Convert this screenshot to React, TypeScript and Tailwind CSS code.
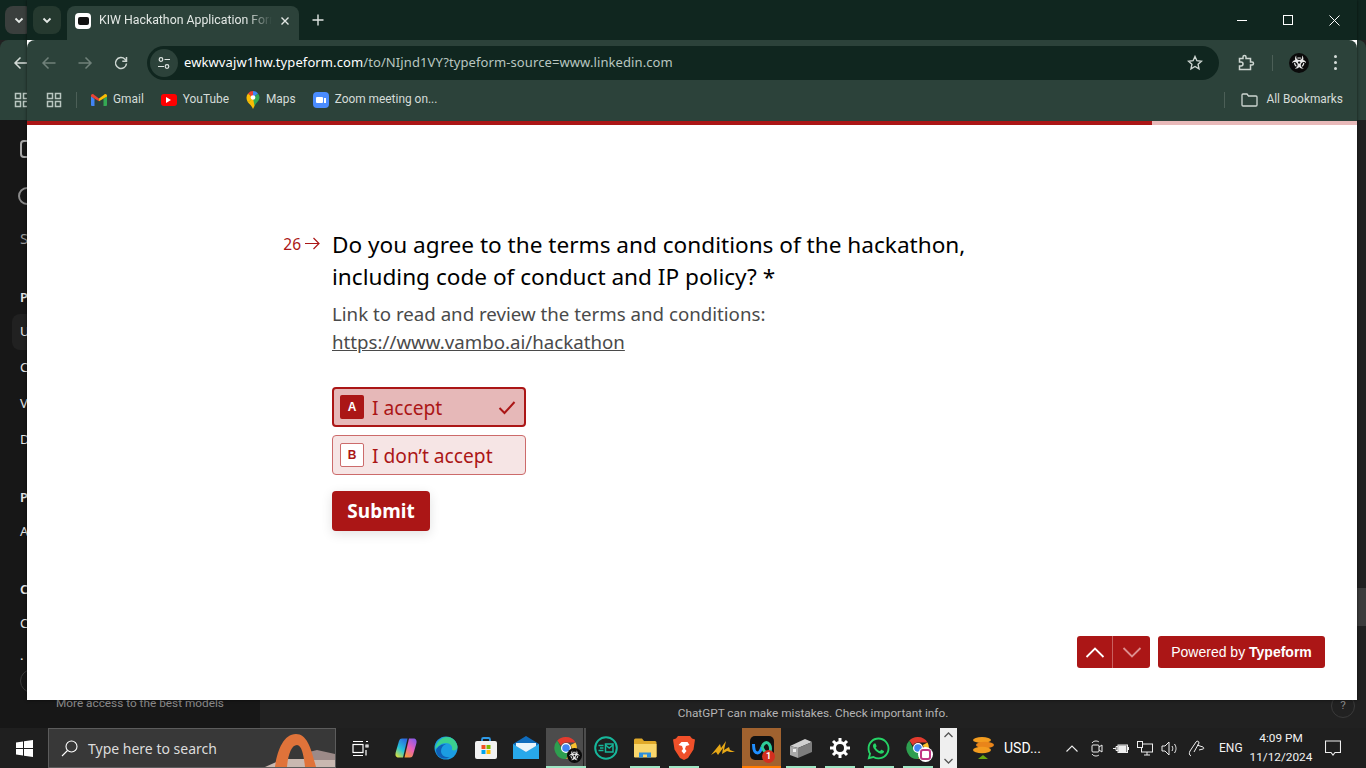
import React from "react";
import { FaBiohazard, FaWhatsapp } from "react-icons/fa";

const ui = "font-['Noto_Sans',sans-serif]";
const chromeFont = "font-['Roboto',sans-serif]";

function ChromeLogo({ size = 24 }: { size?: number }) {
  return (
    <svg width={size} height={size} viewBox="0 0 24 24">
      <path d="M12 1a11 11 0 0 1 9.5 5.5H12a5.5 5.5 0 0 0-5 3.2L3.3 4.6A11 11 0 0 1 12 1z" fill="#e33b2e" />
      <path d="M21.5 6.5A11 11 0 0 1 12 23l4.7-8.2A5.5 5.5 0 0 0 16.8 9z" fill="#fbc02d" />
      <path d="M12 23A11 11 0 0 1 3.3 4.6l4.500 8.600a5.5 5.5 0 0 0 7 2.500z" fill="#2e9e4f" />
      <circle cx="12" cy="12" r="4.4" fill="#4285f4" stroke="#fff" strokeWidth="1.2" />
    </svg>
  );
}

function Biohazard({ size = 20 }: { size?: number }) {
  return (
    <div className="rounded-full bg-[#0b0b0b] flex items-center justify-center" style={{ width: size, height: size }}>
      <FaBiohazard color="#e8e8e8" size={size * 0.72} />
    </div>
  );
}

function AppsGrid({ color = "#b9c6c0" }: { color?: string }) {
  return (
    <svg width="16" height="16" viewBox="0 0 16 16" fill="none" stroke={color} strokeWidth="1.5">
      <rect x="1.500" y="1.500" width="5" height="5" />
      <rect x="9.500" y="1.500" width="5" height="5" />
      <rect x="1.500" y="9.500" width="5" height="5" />
      <rect x="9.500" y="9.500" width="5" height="5" />
    </svg>
  );
}

function Chevron() {
  return (
    <svg width="12" height="12" viewBox="0 0 12 12" fill="none" stroke="#e4e9e6" strokeWidth="1.8">
      <path d="M2.500 4.500 6 8l3.500-3.500" />
    </svg>
  );
}

function NavArrow({ flip = false, color }: { flip?: boolean; color: string }) {
  return (
    <svg width="16" height="16" viewBox="0 0 16 16" fill="none" stroke={color} strokeWidth="1.5" className={flip ? "rotate-180" : ""}>
      <path d="M14.500 8H2M7.500 2.500 2 8l5.500 5.500" />
    </svg>
  );
}

function Bookmark({ icon, label }: { icon: React.ReactNode; label: string }) {
  return (
    <div className="flex items-center gap-[6px] h-7 text-[11.9px] text-[#d5dcd8]">
      {icon}
      <span>{label}</span>
    </div>
  );
}

function BackWindow() {
  return (
    <div className="flex flex-col h-[120px] shrink-0">
      <div className="h-[40px] bg-[#10261f] pl-[5px] pt-[6px]">
        <div className="w-[28px] h-[28px] rounded-lg bg-[#3a3f3d] flex items-center justify-center">
          <Chevron />
        </div>
      </div>
      <div className="flex-1 bg-[#2c423a] rounded-t-lg pl-[13px]">
        <div className="h-[45px] flex items-center">
          <NavArrow color="#d5dcd8" />
        </div>
        <div className="h-[30px] flex items-center pl-[1px]">
          <AppsGrid />
        </div>
      </div>
    </div>
  );
}

function Sidebar() {
  const rows = [
    { t: "P", h: "h-[34px]", bold: true },
    { t: "U", h: "h-[36px]", active: true },
    { t: "C", h: "h-[36px]" },
    { t: "V", h: "h-[36px]" },
    { t: "D", h: "h-[58px]" },
    { t: "P", h: "h-[34px]", bold: true },
    { t: "A", h: "h-[58px]" },
    { t: "C", h: "h-[34px]", bold: true },
    { t: "C", h: "h-[32px]" },
    { t: ".", h: "h-[20px]" },
  ];
  return (
    <div className={`${ui} w-[260px] shrink-0 bg-[#171717] flex flex-col text-[13px] text-[#e6e6e6] pl-[20px]`}>
      <div className="h-[54px] flex items-center pt-[4px]">
        <div className="w-[16px] h-[18px] rounded-[4px] border-2 border-[#a8a8a8]" />
      </div>
      <div className="h-[44px] flex items-center -ml-[2px]">
        <div className="w-[18px] h-[18px] rounded-full border-2 border-[#8a8a8a]" />
      </div>
      <div className="h-[38px] flex items-center text-[15px] pt-[2px] text-[#9a9a9a]">S</div>
      <div className="h-[24px]" />
      {rows.map((r, i) => (
        <div key={i} className={`${r.h} flex items-start ${r.bold ? "font-semibold" : ""}`}>
          <div className={`-ml-[8px] pl-[8px] pr-[20px] h-[36px] flex items-center rounded-lg ${r.active ? "bg-[#212121]" : ""}`}>
            {r.t}
          </div>
        </div>
      ))}
      <div className="flex-1" />
      <div className={`${chromeFont} text-[11.8px] text-[#8a8a8a] pl-[36px] pb-[18px] leading-[14px] relative`}>
        <div className="absolute left-0 -top-[27px] w-[24px] h-[24px] rounded-full border border-[#3a3a3a]" />
        More access to the best models
      </div>
    </div>
  );
}

function ChromeWindow() {
  return (
    <div className={`${ui} absolute left-[27px] top-0 w-[1330px] h-[700px] flex flex-col bg-white overflow-hidden shadow-[0_0_3px_rgba(0,0,0,0.6)]`}>
      {/* barra de pestañas */}
      <div className="h-[40px] shrink-0 bg-[#10261f] flex items-end pl-[6px]">
        <div className="w-[28px] h-[28px] mb-[6px] rounded-lg bg-[#25392f] flex items-center justify-center">
          <Chevron />
        </div>
        <div className="ml-[6px] w-[232px] h-[34px] bg-[#2c423a] rounded-t-lg flex items-center pl-[8px] pr-[9px] pb-[5px]">
          <div className="w-[16px] h-[16px] rounded-[4px] bg-white flex items-center justify-center">
            <div className="w-[11px] h-[8px] rounded-[2px] bg-[#111]" />
          </div>
          <div className={`${chromeFont} ml-[8px] flex-1 overflow-hidden whitespace-nowrap text-[12.3px] text-[#e3e8e5] [mask-image:linear-gradient(to_right,black_85%,transparent)]`}>
            KIW Hackathon Application Form
          </div>
          <svg className="ml-[8px]" width="10" height="10" viewBox="0 0 10 10" stroke="#e3e8e5" strokeWidth="1.4">
            <path d="M1.500 1.500l7 7M8.500 1.500l-7 7" />
          </svg>
        </div>
        <div className="ml-[13px] mb-[14px]">
          <svg width="12" height="12" viewBox="0 0 12 12" stroke="#dfe5e2" strokeWidth="1.4">
            <path d="M6 .5v11M.5 6h11" />
          </svg>
        </div>
        <div className="ml-auto flex h-[40px] items-center">
          <div className="w-[46px] flex justify-center">
            <div className="w-[10px] h-[1px] bg-white" />
          </div>
          <div className="w-[46px] flex justify-center">
            <div className="w-[10px] h-[10px] border border-white" />
          </div>
          <div className="w-[46px] flex justify-center">
            <svg width="11" height="11" viewBox="0 0 11 11" stroke="#fff" strokeWidth="1">
              <path d="M.5.5l10 10M10.500.5l-10 10" />
            </svg>
          </div>
        </div>
      </div>

      {/* barra de direcciones */}
      <div className="h-[45px] shrink-0 bg-[#2c423a] rounded-t-lg flex items-center pl-[14px] pr-[14px]">
        <NavArrow color="#70817a" />
        <div className="ml-[20px]">
          <NavArrow flip color="#70817a" />
        </div>
        <svg className="ml-[20px]" width="16" height="16" viewBox="0 0 16 16" fill="none" stroke="#cdd6d1" strokeWidth="1.5">
          <path d="M13.500 8.500A5.500 5.500 0 1 1 12 4.200L13.500 6" />
          <path d="M13.500 2v4.200H9.300" />
        </svg>
        <div className="ml-[18px] w-[1072px] h-[34px] rounded-full bg-[#10261f] flex items-center pl-[3px] pr-[16px]">
          <div className="w-[28px] h-[28px] rounded-full bg-[#2c423a] flex items-center justify-center">
            <svg width="14" height="14" viewBox="0 0 14 14" fill="none" stroke="#dfe5e2" strokeWidth="1.2">
              <circle cx="4" cy="3.500" r="1.800" />
              <path d="M7.500 3.500H13M1 10.500h6" />
              <circle cx="10" cy="10.500" r="1.800" />
            </svg>
          </div>
          <div className="ml-[6px] pt-[1px] text-[13px] tracking-[0.1px] text-[#b9c6c0]">
            <span className="text-white">ewkwvajw1hw.typeform.com</span>/to/NIjnd1VY?typeform-source=www.linkedin.com
          </div>
          <svg className="ml-auto" width="16" height="16" viewBox="0 0 16 16" fill="none" stroke="#cdd6d1" strokeWidth="1.4">
            <path d="M8 1.500l1.900 4.200 4.600.5-3.400 3.100.9 4.500L8 11.500l-4 2.300.9-4.500L1.500 6.200l4.600-.5z" />
          </svg>
        </div>
        <svg className="ml-[18px]" width="18" height="18" viewBox="0 0 18 18" fill="none" stroke="#cdd6d1" strokeWidth="1.5">
          <path d="M2.500 4.500H6V3a1.500 1.500 0 0 1 3 0v1.500h4.500V8H15a1.500 1.500 0 0 1 0 3h-1.500v4.500h-11V12H4a2 2 0 0 0 0-4H2.500z" />
        </svg>
        <div className="ml-[17px] w-[1px] h-[16px] bg-[#4c5f57]" />
        <div className="ml-[16px]">
          <Biohazard />
        </div>
        <div className="ml-[25px] flex flex-col gap-[3px]">
          <div className="w-[3px] h-[3px] rounded-full bg-[#d5dcd8]" />
          <div className="w-[3px] h-[3px] rounded-full bg-[#d5dcd8]" />
          <div className="w-[3px] h-[3px] rounded-full bg-[#d5dcd8]" />
        </div>
      </div>

      {/* marcadores */}
      <div className={`${chromeFont} h-[36px] shrink-0 bg-[#2c423a] flex items-center pl-[19px] pr-[14px] pb-[6px]`}>
        <AppsGrid />
        <div className="ml-[14px] mr-[14px] w-[1px] h-[16px] bg-[#4c5f57]" />
        <div className="flex items-center gap-[17px]">
          <Bookmark
            label="Gmail"
            icon={
              <svg width="16" height="12" viewBox="0 0 16 12">
                <path d="M0 2v9a1 1 0 0 0 1 1h2.500V5z" fill="#4285f4" />
                <path d="M16 2v9a1 1 0 0 1-1 1h-2.500V5z" fill="#34a853" />
                <path d="M0 2.500V1.800C0 .4 1.500-.4 2.600.4L8 4.500v2.800L0 2.500z" fill="#ea4335" />
                <path d="M16 2.500V1.800C16 .4 14.500-.4 13.400.4L8 4.500v2.800l8-4.800z" fill="#fbbc04" />
              </svg>
            }
          />
          <Bookmark
            label="YouTube"
            icon={
              <div className="w-[16px] h-[12px] rounded-[3px] bg-[#f00] flex items-center justify-center">
                <div className="w-0 h-0 border-y-[3px] border-y-transparent border-l-[5px] border-l-white" />
              </div>
            }
          />
          <Bookmark
            label="Maps"
            icon={
              <svg width="14" height="18" viewBox="0 0 14 18">
                <path d="M7 0a6.500 6.500 0 0 1 5 2.400L7 7z" fill="#4285f4" />
                <path d="M2 2.400A6.500 6.500 0 0 1 7 0v7z" fill="#ea4335" />
                <path d="M12 2.400A6.500 6.500 0 0 1 13.500 6.500c0 3-3.500 5.500-5 8.500L2 11.500z" fill="#34a853" />
                <path d="M.5 6.500A6.500 6.500 0 0 1 2 2.400L7 7l-5 4.500C1 10 .5 8 .5 6.500z" fill="#fbbc04" />
                <path d="M2 11.500 7 7l1.500 8c-.5 1-1 2-1.500 3-.8-2.500-3-4.500-5-6.500z" fill="#fbbc04" />
                <circle cx="7" cy="6.500" r="2.300" fill="#fff" />
              </svg>
            }
          />
          <Bookmark
            label="Zoom meeting on..."
            icon={
              <div className="w-[16px] h-[16px] rounded-[4px] bg-[#4a8cff] flex items-center justify-center gap-[1px]">
                <div className="w-[7px] h-[6px] rounded-[1px] bg-white" />
                <div className="w-[2px] h-[5px] bg-white" />
              </div>
            }
          />
        </div>
        <div className="ml-auto w-[1px] h-[16px] bg-[#4c5f57]" />
        <svg className="ml-[16px]" width="17" height="14" viewBox="0 0 17 14" fill="none" stroke="#cdd6d1" strokeWidth="1.3">
          <path d="M1 2a1 1 0 0 1 1-1h4l1.500 2H15a1 1 0 0 1 1 1v8a1 1 0 0 1-1 1H2a1 1 0 0 1-1-1z" />
        </svg>
        <span className="ml-[8px] text-[11.9px] text-[#d5dcd8]">All Bookmarks</span>
      </div>

      {/* barra de progreso */}
      <div className="h-[4px] shrink-0 bg-[#e8b9b9]">
        <div className="h-full w-[1125px] bg-[#ab1616]" />
      </div>

      <TypeformBody />
    </div>
  );
}

function TypeformBody() {
  return (
    <div className="relative flex-1 bg-white pt-[104px] pl-[255px]">
      <div className="flex">
        <div className="w-[50px] pt-[5px] flex items-start gap-[3px] text-[#ab1616] text-[15.5px] leading-[20px] justify-end pr-[12px] shrink-0">
          <span>26</span>
          <svg className="mt-[3px] shrink-0" width="16" height="13" viewBox="0 0 16 13" fill="none" stroke="#ab1616" strokeWidth="1.2">
            <path d="M1 6.500h14M9.500 1 15 6.500 9.500 12" />
          </svg>
        </div>
        <div className="w-[660px]">
          <h1 className="text-[22.6px] leading-[32px] text-black">
            Do you agree to the terms and conditions of the hackathon,
            <br />
            including code of conduct and IP policy? *
          </h1>
          <p className="mt-[7px] text-[18.7px] leading-[28px] text-[#4a4a4a]">
            Link to read and review the terms and conditions:
            <br />
            <span className="underline">https://www.vambo.ai/hackathon</span>
          </p>
          <div className="mt-[31px] flex flex-col gap-[8px] w-[194px]">
            <div className="h-[40px] rounded-[4px] border-2 border-[#ab1616] bg-[#e6b8b8] flex items-center pl-[6px] pr-[8px]">
              <div className="w-[24px] h-[24px] rounded-[2px] bg-[#ab1616] flex items-center justify-center text-white text-[12px] font-bold font-['Liberation_Sans',sans-serif]">
                A
              </div>
              <span className="ml-[8px] pt-[2px] text-[19.2px] text-[#ab1616]">I accept</span>
              <svg className="ml-auto" width="18" height="15" viewBox="0 0 18 15" fill="none" stroke="#ab1616" strokeWidth="2">
                <path d="M1.500 8 6.500 13 16.500 2" />
              </svg>
            </div>
            <div className="h-[40px] rounded-[4px] border border-[#cc6b6b] bg-[#f6e5e5] flex items-center pl-[7px]">
              <div className="w-[24px] h-[24px] rounded-[2px] bg-white border border-[#cc6b6b] flex items-center justify-center text-[#ab1616] text-[12px] font-bold font-['Liberation_Sans',sans-serif]">
                B
              </div>
              <span className="ml-[8px] pt-[2px] text-[19.2px] text-[#ab1616]">I don’t accept</span>
            </div>
          </div>
          <button className="mt-[16px] w-[98px] h-[40px] rounded-[4px] bg-[#ab1616] text-white text-[19px] font-bold shadow-[0_3px_12px_rgba(0,0,0,0.12)]">
            Submit
          </button>
        </div>
      </div>

      {/* controles flotantes */}
      <div className="absolute right-[32px] bottom-[32px] flex gap-[8px] font-['Liberation_Sans',sans-serif]">
        <div className="h-[32px] w-[73px] rounded-[3px] bg-[#ab1616] flex">
          <div className="w-[36px] flex items-center justify-center border-r border-[#c9605f]">
            <svg width="20" height="11" viewBox="0 0 20 11" fill="none" stroke="#fff" strokeWidth="1.8">
              <path d="M1.500 10 10 1.500 18.500 10" />
            </svg>
          </div>
          <div className="flex-1 flex items-center justify-center">
            <svg width="20" height="11" viewBox="0 0 20 11" fill="none" stroke="#dd8f8f" strokeWidth="1.8">
              <path d="M1.500 1 10 9.500 18.500 1" />
            </svg>
          </div>
        </div>
        <div className="h-[32px] w-[167px] rounded-[3px] bg-[#ab1616] text-white text-[14px] flex items-center justify-center whitespace-nowrap">
          Powered by&nbsp;<b>Typeform</b>
        </div>
      </div>
    </div>
  );
}

function ChatArea() {
  return (
    <div className={`${chromeFont} relative flex-1 bg-[#212121] flex flex-col justify-end`}>
      <div className="absolute right-0 top-[468px] w-[9px] h-[38px] bg-[#3c3c3c]" />
      <div className="h-[28px] flex items-center relative text-[11.8px] text-[#b4b4b4] justify-center">
        ChatGPT can make mistakes. Check important info.
        <div className="absolute right-[11px] -top-[6px] w-[24px] h-[24px] rounded-full border border-[#3a3a3a] flex items-center justify-center text-[#8a8a8a]">
          ?
        </div>
      </div>
    </div>
  );
}

function TaskIcon({ children, active, orange, running, wide }: { children: React.ReactNode; active?: boolean; orange?: boolean; running?: boolean; wide?: boolean }) {
  return (
    <div className={`relative ${wide ? "w-[40px]" : "w-[39px]"} h-[40px] shrink-0 flex items-center justify-center ${active ? "bg-[#4c4c4c]" : ""} ${orange ? "bg-[#a0622f]" : ""}`}>
      {children}
      {running && <div className="absolute bottom-0 left-[5px] right-[4px] h-[2px] bg-[#9fe6c4]" />}
      {active && <div className="absolute bottom-0 left-0 right-0 h-[2px] bg-[#9fe6c4]" />}
      {orange && <div className="absolute bottom-0 left-0 right-0 h-[2px] bg-[#ff7a00]" />}
    </div>
  );
}

function Taskbar() {
  return (
    <div className={`${chromeFont} relative h-[40px] shrink-0 bg-[#1f1f1f] flex items-center text-white`}>
      <div className="w-[48px] flex justify-center">
        <svg width="17" height="17" viewBox="0 0 17 17" fill="#fff">
          <path d="M0 2.400 7 1.400v6.600H0zM8 1.300 17 0v8H8zM0 9h7v6.600l-7-1zM8 9h9v8l-9-1.300z" />
        </svg>
      </div>
      <div className="relative w-[288px] h-[40px] bg-[#383838] border border-[#5c5c5c] flex items-center pl-[12px] overflow-hidden">
        <svg width="17" height="17" viewBox="0 0 17 17" fill="none" stroke="#fff" strokeWidth="1.1">
          <circle cx="10.500" cy="6.500" r="5.500" />
          <path d="M6.500 10.500 1 16" />
        </svg>
        <span className={`${ui} ml-[10px] pt-[1px] text-[14px] text-[#dcdcdc]`}>Type here to search</span>
        <svg className="absolute right-0 bottom-0" width="70" height="38" viewBox="0 0 70 38">
          <path d="M0 38 18 30h52v8z" fill="#c9b8b0" />
          <path d="M40 24l12-3 18 4v6H40z" fill="#9c8a88" />
          <path d="M10 38c2-15 8-33 21-33 11 0 15 14 20 33H40c-1-10-3-22-8-22-6 0-9 11-10 22z" fill="#e0733a" />
        </svg>
      </div>
      <div className="flex items-center pl-[5px]">
        <TaskIcon>
          <svg width="17" height="17" viewBox="0 0 17 17" fill="none" stroke="#fff" strokeWidth="1.2">
            <path d="M1 1.500h10M1 15.500h10" />
            <rect x="1" y="4.500" width="10" height="8" />
            <path d="M14 1.500h2M14 5h2v2h-2zM14 10v5.500" />
          </svg>
        </TaskIcon>
        <div className="w-[6px]" />
        <TaskIcon wide>
          <svg width="24" height="24" viewBox="0 0 24 24">
            <defs>
              <linearGradient id="copA" x1="0.7" y1="0" x2="0.2" y2="1">
                <stop offset="0" stopColor="#2b6be0" />
                <stop offset="0.55" stopColor="#25c4d8" />
                <stop offset="1" stopColor="#d8e040" />
              </linearGradient>
              <linearGradient id="copB" x1="0.8" y1="0" x2="0.2" y2="1">
                <stop offset="0" stopColor="#8a5ae8" />
                <stop offset="0.5" stopColor="#e85fb8" />
                <stop offset="1" stopColor="#f59a3a" />
              </linearGradient>
            </defs>
            <path d="M8 2.500h5.500L9 21.500H4.500C1.500 21.500 1 19 1.800 16L5 5c.5-1.700 1.500-2.500 3-2.500z" fill="url(#copA)" />
            <path d="M16 21.500h-5.500L15 2.500h4.500c3 0 3.500 2.500 2.700 5.500L19 19c-.5 1.700-1.500 2.500-3 2.500z" fill="url(#copB)" />
          </svg>
        </TaskIcon>
        <TaskIcon wide>
          <svg width="24" height="24" viewBox="0 0 24 24">
            <circle cx="12" cy="12" r="11.500" fill="#1b9de2" />
            <path d="M1 13C2 7 7 1 13 1c5 0 10 4 10.500 10 0 3-3 4-5.500 3 1-4-2-7-6-7-5 0-7 3-11 6z" fill="#3bd18f" />
            <path d="M7 15c0 4 4 7 9 6-6 4-14 0-14-7 2-4 6-6 10-6-3 1-5 4-5 7z" fill="#0f5fb5" />
          </svg>
        </TaskIcon>
        <TaskIcon wide>
          <svg width="24" height="24" viewBox="0 0 24 24">
            <path d="M8 6V3.500a1.500 1.500 0 0 1 1.500-1.500h5A1.500 1.500 0 0 1 16 3.500V6" fill="none" stroke="#2f9be8" strokeWidth="1.8" />
            <rect x="1" y="5" width="22" height="18" rx="2" fill="#f2f2f2" />
            <rect x="7.500" y="9" width="4" height="4" fill="#f25022" />
            <rect x="12.500" y="9" width="4" height="4" fill="#7fba00" />
            <rect x="7.500" y="14" width="4" height="4" fill="#00a4ef" />
            <rect x="12.500" y="14" width="4" height="4" fill="#ffb900" />
          </svg>
        </TaskIcon>
        <TaskIcon wide>
          <svg width="26" height="24" viewBox="0 0 26 24">
            <path d="M13 0 26 8v15H0V8z" fill="#0f6cbd" />
            <path d="M0 8l13 8 13-8v15H0z" fill="#28a8ea" />
            <path d="M3 7h20v3l-10 6L3 10z" fill="#e8f4fc" />
          </svg>
        </TaskIcon>
        <TaskIcon wide active>
          <ChromeLogo size={24} />
          <div className="absolute left-[21px] top-[20px]">
            <Biohazard size={15} />
          </div>
          <div className="absolute right-[2px] top-0 bottom-0 w-[1px] bg-[#222]" />
        </TaskIcon>
        <TaskIcon>
          <svg width="24" height="24" viewBox="0 0 24 24" fill="none" stroke="#17b79b" strokeWidth="1.5">
            <circle cx="12" cy="12" r="10.800" strokeWidth="2" />
            <path d="M4.500 9.500h5M6 12h3.500M4.500 14.500h5" />
            <rect x="11.500" y="8" width="7.500" height="8" />
            <path d="M11.500 9l3.700 3 3.800-3" />
          </svg>
        </TaskIcon>
        <TaskIcon running>
          <svg width="24" height="20" viewBox="0 0 24 20">
            <path d="M1 2a1.500 1.500 0 0 1 1.500-1.500H9L11 3h11a1.500 1.500 0 0 1 1.500 1.500V19H1z" fill="#e0a92a" />
            <path d="M1 6h22.500v12.500a1 1 0 0 1-1 1H2a1 1 0 0 1-1-1z" fill="#f9d66c" />
            <path d="M6 19.500v-5h12v5h-4v-3h-4v3z" fill="#2c8fdc" />
          </svg>
        </TaskIcon>
        <TaskIcon running>
          <svg width="22" height="24" viewBox="0 0 22 24">
            <path d="M5 0h12l2 2.500 3 1-1.500 10L15 22l-4 2-4-2-5.500-8.500L0 3.500l3-1z" fill="#f0502a" />
            <path d="M5.500 9l3.500 1 1 3-1.500 2 2.500 3 2.500-3-1.500-2 1-3 3.500-1-2-3h-6z" fill="#fff" />
          </svg>
        </TaskIcon>
        <TaskIcon>
          <svg width="24" height="14" viewBox="0 0 24 14" fill="#e8a917">
            <path d="M0 14 9 3l1 4 5-7-2 9 5-3 1 3 5 2h-5l-3-1-5 3 1-6-5 7-2-3z" />
          </svg>
        </TaskIcon>
        <TaskIcon orange>
          <div className="w-[24px] h-[24px] rounded-[5px] bg-[#111] flex items-center justify-center">
            <svg width="20" height="14" viewBox="0 0 20 14" fill="none" strokeWidth="3">
              <path d="M1.500 3c0 6 1.500 9 4 9s3.500-3 4.500-6" stroke="#1f8fff" />
              <path d="M10 6c1-2.500 2.500-4.500 4.500-4.500s4 3 4 6-1.500 4.500-3 4.500-4-2.500-5.500-6" stroke="#2ecc9a" />
            </svg>
          </div>
          <div className="absolute left-[20px] top-[22px] w-[13px] h-[13px] rounded-full bg-[#d32f1f] text-[9px] font-bold leading-[13px] text-center">
            1
          </div>
        </TaskIcon>
        <TaskIcon running>
          <svg width="24" height="22" viewBox="0 0 24 22">
            <path d="M1 9 16 2l7 3-14 6z" fill="#d0d0d0" />
            <path d="M1 9l8 2v10l-8-3z" fill="#a9a9a9" />
            <path d="M9 11l14-6v10L9 21z" fill="#7d7d7d" />
            <rect x="4" y="12" width="3" height="3" fill="#eee" />
          </svg>
        </TaskIcon>
        <TaskIcon running>
          <svg width="20" height="20" viewBox="0 0 20 20" fill="none" stroke="#fff">
            <circle cx="10" cy="10" r="5.500" strokeWidth="3" />
            <path d="M10 0v4M10 16v4M0 10h4M16 10h4M3 3l2.800 2.800M14.200 14.200 17 17M3 17l2.800-2.800M14.200 5.800 17 3" strokeWidth="3" />
          </svg>
        </TaskIcon>
        <TaskIcon running>
          <FaWhatsapp color="#25d366" size={25} />
        </TaskIcon>
        <TaskIcon running>
          <ChromeLogo size={24} />
          <div className="absolute left-[20px] top-[19px] w-[15px] h-[15px] rounded-full bg-white flex items-center justify-center">
            <div className="w-[11px] h-[11px] rounded-[3px] border-2 border-[#c13584]" />
          </div>
        </TaskIcon>
      </div>
      <div className="ml-[3px] w-[17px] h-[40px] bg-[#efefef] flex flex-col items-center justify-between py-[4px]">
        <svg width="9" height="6" viewBox="0 0 9 6" fill="none" stroke="#555" strokeWidth="1.3"><path d="M.5 5 4.500 1l4 4" /></svg>
        <svg width="9" height="6" viewBox="0 0 9 6" fill="none" stroke="#555" strokeWidth="1.3"><path d="M.5 1l4 4 4-4" /></svg>
      </div>
      <div className="ml-[14px]">
        <svg width="24" height="26" viewBox="0 0 24 26">
          <ellipse cx="11" cy="5" rx="9" ry="3" fill="#f39c1f" />
          <ellipse cx="14" cy="10" rx="9" ry="3.200" fill="#e9851a" />
          <ellipse cx="11" cy="15" rx="9" ry="3.200" fill="#f39c1f" />
          <path d="M7 24l5-4 5 4z" fill="#6aa80f" />
        </svg>
      </div>
      <span className="ml-[9px] text-[14px]">USD...</span>
      <div className="ml-auto flex items-center text-[#f2f2f2]">
        <svg width="12" height="7" viewBox="0 0 12 7" fill="none" stroke="#eee" strokeWidth="1.1"><path d="M.5 6.500 6 1l5.500 5.500" /></svg>
        <svg className="ml-[13px]" width="12" height="17" viewBox="0 0 12 17" fill="none" stroke="#eee" strokeWidth="1"><path d="M1 3c2-3 6-2 7-1M1 14c2 3 6 2 7 1" /><rect x="1" y="5" width="7" height="7" rx="1" /><path d="M8 7l3-2v7l-3-2" /></svg>
        <svg className="ml-[10px]" width="16" height="11" viewBox="0 0 16 11" fill="none" stroke="#eee" strokeWidth="1"><rect x="5" y="2" width="9.500" height="7.500" /><rect x="6" y="3" width="7" height="5.500" fill="#eee" /><path d="M15.500 4v3M0 5.500h3M3 3.500h2v4H3z" /></svg>
        <svg className="ml-[8px]" width="16" height="15" viewBox="0 0 16 15" fill="none" stroke="#eee" strokeWidth="1"><rect x="4.500" y="3" width="11" height="8" /><rect x=".5" y=".5" width="5" height="6" fill="#1f1f1f" /><path d="M10 11v3M7 14h6" /></svg>
        <svg className="ml-[8px]" width="17" height="15" viewBox="0 0 17 15" fill="none" stroke="#eee" strokeWidth="1"><path d="M1 5h3l4-4v13l-4-4H1zM11 5c1 1.500 1 3.500 0 5M13.500 3c2 3 2 6 0 9" /></svg>
        <svg className="ml-[10px]" width="17" height="17" viewBox="0 0 17 17" fill="none" stroke="#eee" strokeWidth="1"><path d="M3 16c-2-1-2-3-1-5l6-9c1-1.500 3-1 3 1l-5 9M9 5l6 2c1 .5 1 2 0 2l-4 1" /></svg>
        <span className="ml-[14px] text-[12px] w-[24px]">ENG</span>
        <div className="ml-[6px] w-[64px] text-center text-[11.8px] leading-[19px]">
          4:09 PM
          <br />
          11/12/2024
        </div>
        <svg className="ml-[12px] mr-[25px]" width="16" height="16" viewBox="0 0 16 16" fill="none" stroke="#eee" strokeWidth="1.1">
          <path d="M.5 1h15v11.500H10l-2 2.500-2-2.500H.5z" />
        </svg>
      </div>
    </div>
  );
}

export default function App() {
  return (
    <div className="relative w-[1366px] h-[768px] overflow-hidden bg-[#212121] flex flex-col">
      <div className="relative flex-1 flex flex-col min-h-0">
        <BackWindow />
        <div className="flex-1 flex min-h-0">
          <Sidebar />
          <ChatArea />
        </div>
        <ChromeWindow />
      </div>
      <Taskbar />
    </div>
  );
}
